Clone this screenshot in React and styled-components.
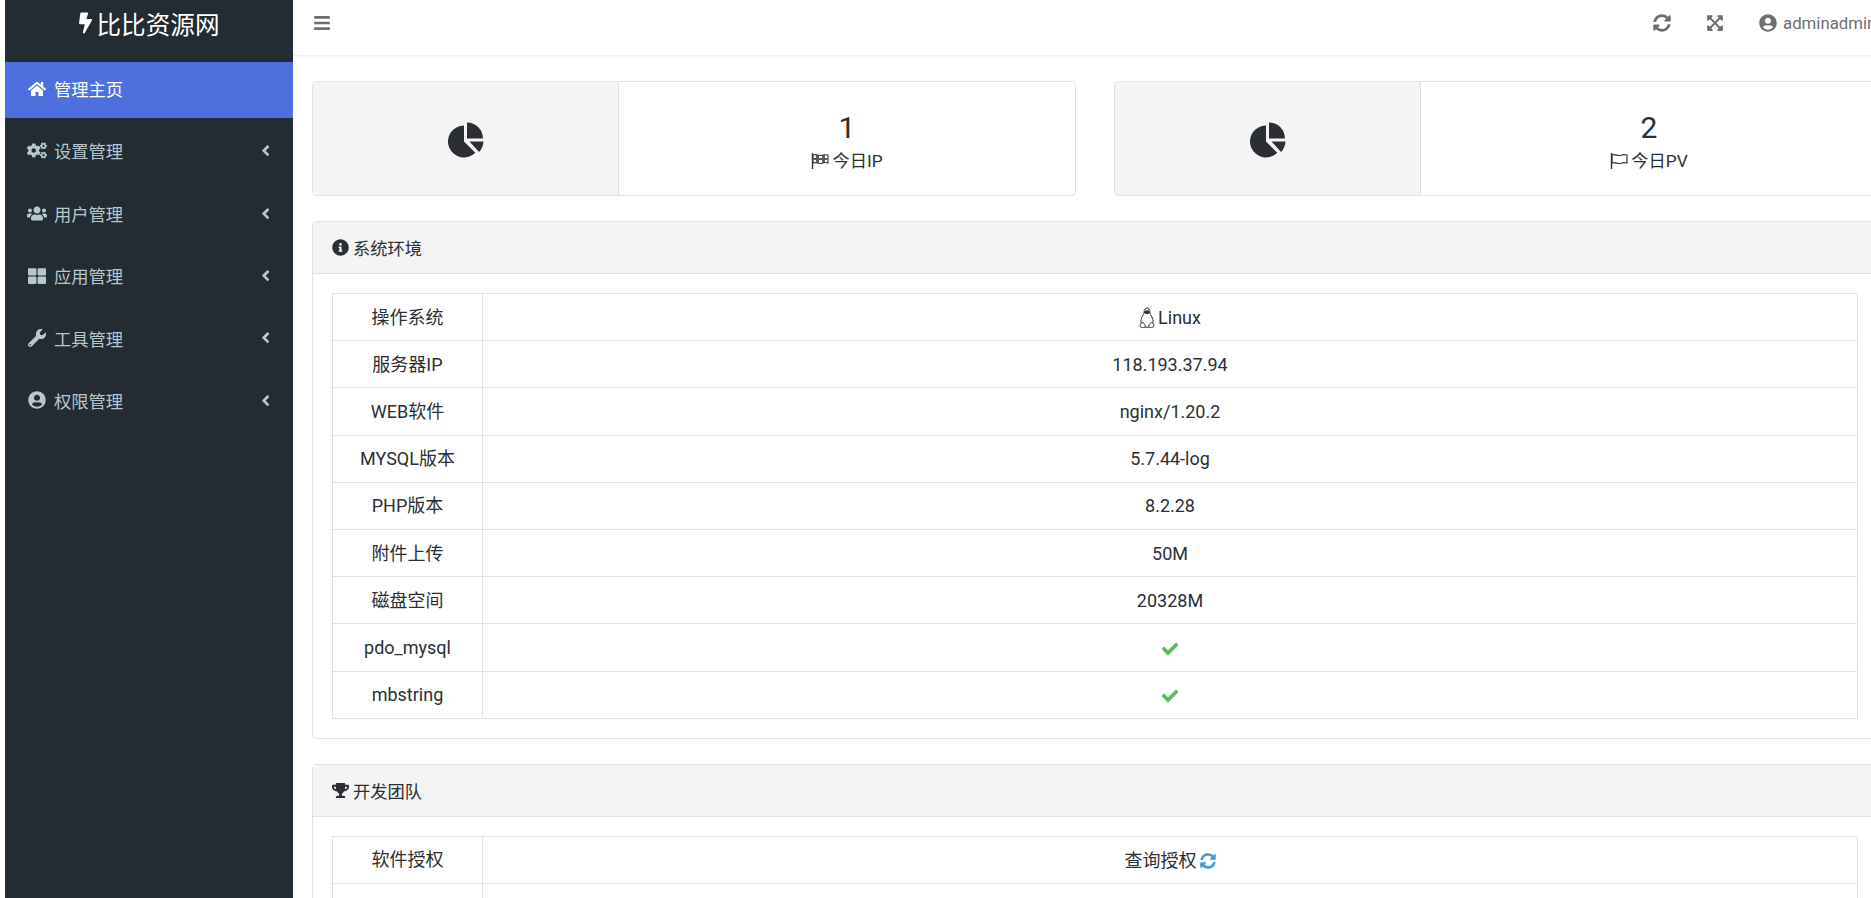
import React from 'react';
import styled, { createGlobalStyle } from 'styled-components';
import {
  FaAngleLeft,
  FaBars,
  FaBolt,
  FaCheck,
  FaCogs,
  FaExpandArrowsAlt,
  FaHome,
  FaInfoCircle,
  FaSyncAlt,
  FaThLarge,
  FaTrophy,
  FaUserCircle,
  FaUsers,
  FaWrench,
} from 'react-icons/fa';

const GlobalStyle = createGlobalStyle`
  * {
    box-sizing: border-box;
  }

  html,
  body {
    margin: 0;
    height: 100%;
    overflow: hidden;
    background-color: #fff;
  }

  body {
    font-family: Roboto, "Noto Sans CJK SC", sans-serif;
    color: #2b2f33;
  }
`;

const menuItems = [
  { label: '管理主页', icon: <FaHome />, active: true },
  { label: '设置管理', icon: <FaCogs />, large: true },
  { label: '用户管理', icon: <FaUsers />, large: true },
  { label: '应用管理', icon: <FaThLarge /> },
  { label: '工具管理', icon: <FaWrench /> },
  { label: '权限管理', icon: <FaUserCircle /> },
];

const PieIcon = () => (
  <svg width="36" height="36" viewBox="0 0 36 36" fill="currentColor">
    <path d="M16 19.5V3.5A16 16 0 1 0 27.3 30.8Z" />
    <path d="M19 16.5V.5A16 16 0 0 1 35 16.5Z" />
    <path d="M21.5 19.5H35.5A16 16 0 0 1 31 30Z" />
  </svg>
);

const CheckeredFlag = () => (
  <svg width="18" height="18" viewBox="0 0 18 18">
    <path d="M1.5 1V17" stroke="#333" strokeWidth="1.4" fill="none" />
    <path
      d="M2 3C5 1.5 8 4.5 11 3.2 13 2.4 15 2.6 17 3V11C15 10.4 13 10.4 11 11.2 8 12.5 5 9.6 2 11Z"
      fill="#fff"
      stroke="#333"
      strokeWidth="1.1"
    />
    <path d="M5 3V6H2.4V8H5V10.4L8 11V8H11V11L14 10.5V8H16.5V6H14V3L11 3.4V6H8V3.6Z" fill="#333" opacity="0.8" />
  </svg>
);

const OutlineFlag = () => (
  <svg width="18" height="18" viewBox="0 0 18 18" fill="none" stroke="#333" strokeWidth="1.2">
    <path d="M1.5 1V17" strokeWidth="1.4" />
    <path d="M2 3C5 1.5 8 4.5 11 3.2 13 2.4 15 2.6 17 3V11C15 10.4 13 10.4 11 11.2 8 12.5 5 9.6 2 11Z" />
  </svg>
);

const Penguin = () => (
  <svg width="16" height="22" viewBox="0 0 16 22" fill="none" stroke="#333" strokeWidth="1">
    <path d="M8 1C5.8 1 5 3 5.2 5 5.3 6.5 3.6 8.5 2.6 11 1.8 13 1.6 15 2.4 16.2M8 1C10.2 1 11 3 10.8 5 10.7 6.5 12.4 8.5 13.4 11 14.2 13 14.4 15 13.6 16.2" />
    <path d="M5.2 5.4C6.5 7 9.5 7 10.8 5.4L8 3.6Z" fill="#333" />
    <path d="M6 3H7M9 3H10" strokeWidth="1.2" />
    <path d="M2.4 16C1.4 17 .8 18.6 1.2 19.4 2 20.6 4.6 20.8 5.6 20.4 6.6 20 6.4 18 5.2 16.6 4.4 15.8 3 15.4 2.4 16Z" />
    <path d="M13.6 16C14.6 17 15.2 18.6 14.8 19.4 14 20.6 11.4 20.8 10.4 20.4 9.4 20 9.6 18 10.8 16.6 11.6 15.8 13 15.4 13.6 16Z" />
    <path d="M6 20.2H10" />
  </svg>
);

const environmentRows = [
  { name: '操作系统', value: <LinuxValue /> },
  { name: '服务器IP', value: '118.193.37.94' },
  { name: 'WEB软件', value: 'nginx/1.20.2' },
  { name: 'MYSQL版本', value: '5.7.44-log' },
  { name: 'PHP版本', value: '8.2.28' },
  { name: '附件上传', value: '50M' },
  { name: '磁盘空间', value: '20328M' },
  { name: 'pdo_mysql', value: <GreenCheck /> },
  { name: 'mbstring', value: <GreenCheck /> },
];

function LinuxValue() {
  return (
    <InlineRow>
      <Penguin />
      Linux
    </InlineRow>
  );
}

function GreenCheck() {
  return <CheckMark />;
}

const InfoTable = ({ rows }) => (
  <Table>
    <tbody>
      {rows.map((row, index) => (
        <tr key={index}>
          <NameCell>{row.name}</NameCell>
          <td>{row.value}</td>
        </tr>
      ))}
    </tbody>
  </Table>
);

const App = () => {
  return (
    <>
      <GlobalStyle />
      <Page>
        <Sidebar>
          <Logo>
            <FaBolt />
            比比资源网
          </Logo>
          <Menu>
            {menuItems.map((item) => (
              <MenuItem key={item.label} $active={item.active}>
                <MenuIcon $large={item.large}>{item.icon}</MenuIcon>
                <MenuLabel>{item.label}</MenuLabel>
                {!item.active && <FaAngleLeft />}
              </MenuItem>
            ))}
          </Menu>
        </Sidebar>
        <Main>
          <TopBar>
            <ToggleButton>
              <FaBars />
            </ToggleButton>
            <TopActions>
              <TopIcon>
                <FaSyncAlt />
              </TopIcon>
              <TopIcon>
                <FaExpandArrowsAlt />
              </TopIcon>
              <UserInfo>
                <FaUserCircle />
                adminadmin
              </UserInfo>
            </TopActions>
          </TopBar>
          <Content>
            <StatGrid>
              <StatCard>
                <StatIcon>
                  <PieIcon />
                </StatIcon>
                <StatBody>
                  <StatNumber>1</StatNumber>
                  <StatLabel>
                    <CheckeredFlag />
                    今日IP
                  </StatLabel>
                </StatBody>
              </StatCard>
              <StatCard>
                <StatIcon>
                  <PieIcon />
                </StatIcon>
                <StatBody>
                  <StatNumber>2</StatNumber>
                  <StatLabel>
                    <OutlineFlag />
                    今日PV
                  </StatLabel>
                </StatBody>
              </StatCard>
            </StatGrid>
            <Panel>
              <PanelHeader>
                <FaInfoCircle />
                系统环境
              </PanelHeader>
              <PanelBody>
                <InfoTable rows={environmentRows} />
              </PanelBody>
            </Panel>
            <Panel>
              <PanelHeader>
                <FaTrophy />
                开发团队
              </PanelHeader>
              <PanelBody>
                <InfoTable
                  rows={[
                    {
                      name: '软件授权',
                      value: (
                        <InlineRow>
                          查询授权
                          <BlueSync />
                        </InlineRow>
                      ),
                    },
                    { name: '', value: '' },
                  ]}
                />
              </PanelBody>
            </Panel>
          </Content>
        </Main>
      </Page>
    </>
  );
};

const Page = styled.div`
  display: flex;
  width: 1871px;
  height: 898px;
  padding-left: 5px;
  overflow: hidden;
`;

const Sidebar = styled.aside`
  flex: 0 0 288px;
  height: 100%;
  background-color: #222c32;
`;

const Logo = styled.div`
  display: flex;
  align-items: center;
  justify-content: center;
  gap: 5px;
  height: 62px;
  padding-bottom: 16px;
  color: #fff;
  font-size: 24.6px;

  svg {
    width: 13px;
    height: 24px;
  }
`;

const Menu = styled.nav`
  display: flex;
  flex-direction: column;
  gap: 6.4px;
`;

const MenuItem = styled.div`
  display: flex;
  align-items: center;
  height: 56px;
  padding: 0 19px 3px 22px;
  background-color: ${(props) => (props.$active ? '#4e6fdd' : 'transparent')};
  color: ${(props) => (props.$active ? '#fff' : '#b8c7ce')};
  font-size: 17.3px;
`;

const MenuIcon = styled.span`
  display: flex;
  justify-content: center;
  width: 20px;
  margin-right: 7px;
  font-size: ${(props) => (props.$large ? '21px' : '18px')};
`;

const MenuLabel = styled.span`
  flex: 1;
`;

const Main = styled.main`
  flex: 0 0 1585px;
  min-width: 0;
`;

const TopBar = styled.header`
  display: flex;
  align-items: center;
  justify-content: space-between;
  height: 56px;
  padding: 0 0 9px 20px;
  border-bottom: 1px solid #eceeef;
  box-shadow: 0 1px 3px rgba(0, 0, 0, 0.04);
  color: #6c6f72;
`;

const ToggleButton = styled.div`
  display: flex;
  font-size: 18px;
`;

const TopActions = styled.div`
  display: flex;
  align-items: center;
  width: 225px;
`;

const TopIcon = styled.div`
  display: flex;
  width: 53px;
  font-size: 18px;
`;

const UserInfo = styled.div`
  display: flex;
  align-items: center;
  gap: 6px;
  font-size: 16.8px;
  white-space: nowrap;

  svg {
    font-size: 18px;
  }
`;

const Content = styled.div`
  display: flex;
  flex-direction: column;
  padding: 25px 0 0 19px;
`;

const StatGrid = styled.div`
  display: grid;
  grid-template-columns: 764px 764px;
  gap: 38px;
  margin-bottom: 25px;
`;

const StatCard = styled.div`
  display: flex;
  height: 115px;
  border: 1px solid #e0e2e4;
  border-radius: 4px;
  overflow: hidden;
`;

const StatIcon = styled.div`
  display: flex;
  flex: 0 0 306px;
  align-items: center;
  justify-content: center;
  padding-top: 3px;
  background-color: #f4f4f4;
  border-right: 1px solid #dcdfe1;
  color: #2b2f33;
`;

const StatBody = styled.div`
  display: flex;
  flex: 1;
  flex-direction: column;
  align-items: center;
  justify-content: center;
  gap: 2px;
  padding-top: 5px;
`;

const StatNumber = styled.div`
  font-size: 30px;
  line-height: 38px;
`;

const StatLabel = styled.div`
  display: flex;
  align-items: center;
  gap: 3px;
  font-size: 17.3px;
  line-height: 24px;
`;

const Panel = styled.section`
  margin-bottom: 25px;
  border: 1px solid #e0e2e4;
  border-radius: 4px;
`;

const PanelHeader = styled.div`
  display: flex;
  align-items: center;
  gap: 4px;
  height: 52px;
  padding: 0 19px;
  background-color: #f4f4f4;
  border-bottom: 1px solid #e0e2e4;
  font-size: 17.3px;

  svg {
    font-size: 17px;
  }
`;

const PanelBody = styled.div`
  padding: 19px;
`;

const Table = styled.table`
  width: 100%;
  border-collapse: collapse;
  font-size: 18px;
  line-height: 27px;
  text-align: center;

  tr {
    height: 47.2px;
  }

  td {
    padding: 0;
    border: 1px solid #dee2e6;
  }
`;

const NameCell = styled.td`
  width: 150px;
`;

const InlineRow = styled.span`
  display: inline-flex;
  align-items: center;
  gap: 3px;
  vertical-align: middle;
`;

const CheckMark = styled(FaCheck)`
  color: #5cb85c;
  font-size: 16px;
  vertical-align: middle;
  stroke: currentColor;
  stroke-width: 24;
`;

const BlueSync = styled(FaSyncAlt)`
  color: #3b9ae1;
  font-size: 16px;
`;

export default App;
